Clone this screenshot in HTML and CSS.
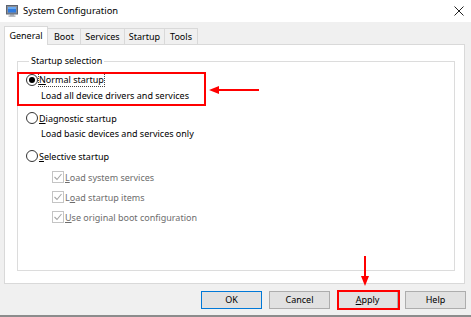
FILE: index.html
```html
<!DOCTYPE html>
<html lang="en">
    <head>
        <meta charset="UTF-8">
        <link rel="stylesheet" href="styles.css">
    </head>
    <body>
        <div class="window">
            <div class="titlebar">
                <svg class="app-icon" width="12" height="12" viewBox="0 0 12 12">
                    <rect x="0.5" y="0.5" width="11" height="8.5" fill="#8a8f99" stroke="#5d6470"/>
                    <rect x="2" y="2" width="8" height="5.5" fill="#2f7be0"/>
                    <rect x="2" y="2" width="8" height="2" fill="#6aaaf2"/>
                    <rect x="4" y="9.5" width="4" height="1" fill="#7b808a"/>
                    <rect x="2.5" y="10.5" width="7" height="1.2" fill="#9aa0a8"/>
                </svg>
                <span class="title">System Configuration</span>
                <svg class="close" width="10" height="10" viewBox="0 0 10 10">
                    <path d="M0.5 0.5 L9.5 9.5 M9.5 0.5 L0.5 9.5" stroke="#222" stroke-width="1"/>
                </svg>
            </div>

            <div class="client">
                <div class="tabs">
                    <div class="tab active">General</div>
                    <div class="tab tab-boot">Boot</div>
                    <div class="tab tab-services">Services</div>
                    <div class="tab tab-startup">Startup</div>
                    <div class="tab tab-tools">Tools</div>
                </div>

                <div class="panel">
                    <fieldset class="group">
                        <legend>Startup selection</legend>

                        <div class="option first">
                            <span class="radio checked"></span>
                            <span class="focus"><u>N</u>ormal startup</span>
                        </div>
                        <div class="hint">Load all device drivers and services</div>

                        <div class="option">
                            <span class="radio"></span>
                            <span><u>D</u>iagnostic startup</span>
                        </div>
                        <div class="hint">Load basic devices and services only</div>

                        <div class="option">
                            <span class="radio"></span>
                            <span><u>S</u>elective startup</span>
                        </div>

                        <div class="checks">
                            <div class="check">
                                <span class="box">
                                    <svg width="10" height="10" viewBox="0 0 10 10"><path d="M1.5 5 L4 7.5 L8.5 2" fill="none" stroke="#a6a6a6" stroke-width="1.1"/></svg>
                                </span>
                                <span><u>L</u>oad system services</span>
                            </div>
                            <div class="check">
                                <span class="box">
                                    <svg width="10" height="10" viewBox="0 0 10 10"><path d="M1.5 5 L4 7.5 L8.5 2" fill="none" stroke="#a6a6a6" stroke-width="1.1"/></svg>
                                </span>
                                <span>L<u>o</u>ad startup items</span>
                            </div>
                            <div class="check">
                                <span class="box">
                                    <svg width="10" height="10" viewBox="0 0 10 10"><path d="M1.5 5 L4 7.5 L8.5 2" fill="none" stroke="#a6a6a6" stroke-width="1.1"/></svg>
                                </span>
                                <span><u>U</u>se original boot configuration</span>
                            </div>
                        </div>
                    </fieldset>
                </div>

                <div class="buttons">
                    <button class="btn default">OK</button>
                    <button class="btn">Cancel</button>
                    <button class="btn"><u>A</u>pply</button>
                    <button class="btn">Help</button>
                </div>
            </div>

            <!-- red annotations drawn over the dialog -->
            <div class="mark mark-normal"></div>
            <div class="mark mark-apply"></div>
            <svg class="arrow arrow-left" width="52" height="10" viewBox="0 0 52 10">
                <path d="M50 5 L8 5" stroke="#f00" stroke-width="2"/>
                <path d="M0 5 L10 1 L10 9 Z" fill="#f00"/>
            </svg>
            <svg class="arrow arrow-down" width="10" height="30" viewBox="0 0 10 30">
                <path d="M5 0 L5 22" stroke="#f00" stroke-width="2"/>
                <path d="M5 30 L1 20 L9 20 Z" fill="#f00"/>
            </svg>
        </div>
    </body>
</html>
```

FILE: styles.css
```css
html, body {
    margin: 0;
    padding: 0;
}

body {
    font-family: "Noto Sans", "Open Sans", sans-serif;
    font-size: 9px;
    color: #000;
    background-color: #f0f0f0;
}

.window {
    position: relative;
    width: 471px;
    height: 317px;
    display: flex;
    flex-direction: column;
    box-sizing: border-box;
    border-bottom: 2px solid #8c8c8c;
    overflow: hidden;
}

.titlebar {
    height: 22px;
    background-color: #fff;
    display: flex;
    align-items: center;
    padding-left: 6px;
    padding-right: 7px;
    flex-shrink: 0;
}

.app-icon {
    margin-top: -1px;
}

.title {
    font-size: 9.4px;
    margin-left: 5px;
    margin-top: -2px;
}

.close {
    margin-left: auto;
    margin-top: -1px;
}

.client {
    flex: 1;
    padding: 4px 0 0 4px;
    display: flex;
    flex-direction: column;
}

.tabs {
    display: flex;
    align-items: flex-end;
    height: 18px;
    position: relative;
    z-index: 1;
}

.tab {
    height: 16px;
    line-height: 15px;
    text-align: center;
    border: 1px solid #d9d9d9;
    border-bottom: none;
    margin-left: -1px;
    background-color: #f0f0f0;
    box-sizing: border-box;
}

.tab.active {
    width: 44px;
    height: 19px;
    line-height: 17px;
    margin-left: 0;
    margin-bottom: -1px;
    background-color: #fff;
}

.tab-boot {
    width: 34px;
    margin-left: -1px;
}

.tab-services {
    width: 45px;
}

.tab-startup {
    width: 41px;
}

.tab-tools {
    width: 34px;
}

.panel {
    width: 461px;
    height: 240px;
    box-sizing: border-box;
    background-color: #fff;
    border: 1px solid #d9d9d9;
    padding: 9px 9px 0 12px;
}

.group {
    margin: 0;
    height: 217px;
    box-sizing: border-box;
    border: 1px solid #dcdcdc;
    padding: 0 0 0 8px;
}

.group legend {
    padding: 0 2px;
    margin-left: 3px;
    line-height: 14px;
    color: #000;
}

.option {
    display: flex;
    align-items: center;
    height: 16px;
    margin-top: 6px;
}

.option.first {
    margin-top: 4px;
}

.radio {
    width: 12px;
    height: 12px;
    border: 1px solid #333;
    border-radius: 50%;
    box-sizing: border-box;
    background-color: #fff;
    margin-right: 1px;
    display: flex;
    align-items: center;
    justify-content: center;
}

.radio.checked::after {
    content: "";
    width: 6px;
    height: 6px;
    border-radius: 50%;
    background-color: #000;
}

.focus {
    outline: 1px dotted #444;
    line-height: 12px;
}

.hint {
    height: 16px;
    line-height: 16px;
    padding-left: 15px;
}

.checks {
    padding-top: 3px;
    padding-left: 26px;
}

.check {
    display: flex;
    align-items: center;
    height: 20px;
    color: #6d6d6d;
}

.box {
    width: 12px;
    height: 12px;
    box-sizing: border-box;
    border: 1px solid #c4c4c4;
    display: flex;
    align-items: center;
    justify-content: center;
    margin-right: 1px;
}

.buttons {
    display: flex;
    justify-content: flex-end;
    gap: 7px;
    padding-top: 7px;
    padding-right: 5px;
}

.btn {
    width: 61px;
    height: 18px;
    font-family: inherit;
    font-size: 9px;
    line-height: 14px;
    padding: 0;
    background-color: #e1e1e1;
    border: 1px solid #adadad;
    color: #000;
}

.btn.default {
    border-color: #0078d7;
}

.mark {
    position: absolute;
    border: 2px solid #f00;
    box-sizing: border-box;
}

.mark-normal {
    left: 17px;
    top: 72px;
    width: 189px;
    height: 34px;
}

.mark-apply {
    left: 337px;
    top: 290px;
    width: 63px;
    height: 20px;
}

.arrow {
    position: absolute;
}

.arrow-left {
    left: 209px;
    top: 85px;
}

.arrow-down {
    left: 360px;
    top: 256px;
}
```
